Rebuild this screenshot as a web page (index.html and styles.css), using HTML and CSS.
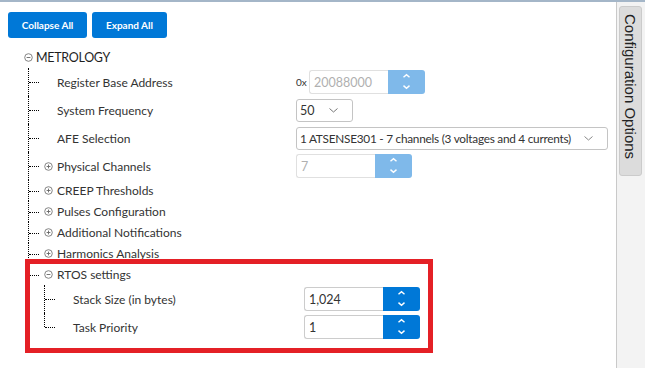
FILE: index.html
```html
<!DOCTYPE html>
<html>
<head>
<meta charset="utf-8">
<link rel="stylesheet" href="styles.css">
</head>
<body>
<div class="app">
  <main class="main">
    <div class="toolbar">
      <button class="btn">Collapse All</button>
      <button class="btn">Expand All</button>
    </div>
    <ul class="tree">
      <li class="node root">
        <div class="row head">
          <svg class="exp" width="9" height="9" viewBox="0 0 9 9"><circle cx="4.5" cy="4.5" r="3.8" fill="none" stroke="#777" stroke-width="0.9"/><path d="M2.6 4.5H6.4" stroke="#666" stroke-width="0.9"/></svg>
          <span class="title">METROLOGY</span>
        </div>
        <ul class="children lvl1">
          <li class="node">
            <div class="row tall leaf">
              <span class="label">Register Base Address</span>
              <div class="ctrl">
                <span class="prefix">0x</span>
                <div class="field disabled"><span class="value">20088000</span></div>
                <div class="spin disabled"><svg width="37" height="24" viewBox="0 0 37 24"><path d="M15.5 7.2L18.5 4.6L21.5 7.2M15.5 15.6L18.5 18.2L21.5 15.6" fill="none" stroke="#fff" stroke-width="1.4"/></svg></div>
              </div>
            </div>
          </li>
          <li class="node">
            <div class="row tall leaf">
              <span class="label">System Frequency</span>
              <div class="ctrl">
                <div class="select small"><span class="value">50</span><svg class="chev" width="9" height="5" viewBox="0 0 9 5"><path d="M0.5 0.5L4.5 4L8.5 0.5" fill="none" stroke="#777" stroke-width="1"/></svg></div>
              </div>
            </div>
          </li>
          <li class="node">
            <div class="row tall leaf">
              <span class="label">AFE Selection</span>
              <div class="ctrl">
                <div class="select wide"><span class="value">1 ATSENSE301 - 7 channels (3 voltages and 4 currents)</span><svg class="chev" width="9" height="5" viewBox="0 0 9 5"><path d="M0.5 0.5L4.5 4L8.5 0.5" fill="none" stroke="#888" stroke-width="1"/></svg></div>
              </div>
            </div>
          </li>
          <li class="node">
            <div class="row tall branch">
              <svg class="exp" width="9" height="9" viewBox="0 0 9 9"><circle cx="4.5" cy="4.5" r="3.8" fill="none" stroke="#777" stroke-width="0.9"/><path d="M2.6 4.5H6.4M4.5 2.6V6.4" stroke="#666" stroke-width="0.9"/></svg>
              <span class="label blabel">Physical Channels</span>
              <div class="ctrl">
                <div class="field disabled"><span class="value">7</span></div>
                <div class="spin disabled"><svg width="37" height="24" viewBox="0 0 37 24"><path d="M15.5 7.2L18.5 4.6L21.5 7.2M15.5 15.6L18.5 18.2L21.5 15.6" fill="none" stroke="#fff" stroke-width="1.4"/></svg></div>
              </div>
            </div>
          </li>
          <li class="node">
            <div class="row branch">
              <svg class="exp" width="9" height="9" viewBox="0 0 9 9"><circle cx="4.5" cy="4.5" r="3.8" fill="none" stroke="#777" stroke-width="0.9"/><path d="M2.6 4.5H6.4M4.5 2.6V6.4" stroke="#666" stroke-width="0.9"/></svg>
              <span class="text">CREEP Thresholds</span>
            </div>
          </li>
          <li class="node">
            <div class="row branch">
              <svg class="exp" width="9" height="9" viewBox="0 0 9 9"><circle cx="4.5" cy="4.5" r="3.8" fill="none" stroke="#777" stroke-width="0.9"/><path d="M2.6 4.5H6.4M4.5 2.6V6.4" stroke="#666" stroke-width="0.9"/></svg>
              <span class="text">Pulses Configuration</span>
            </div>
          </li>
          <li class="node">
            <div class="row branch">
              <svg class="exp" width="9" height="9" viewBox="0 0 9 9"><circle cx="4.5" cy="4.5" r="3.8" fill="none" stroke="#777" stroke-width="0.9"/><path d="M2.6 4.5H6.4M4.5 2.6V6.4" stroke="#666" stroke-width="0.9"/></svg>
              <span class="text">Additional Notifications</span>
            </div>
          </li>
          <li class="node">
            <div class="row branch">
              <svg class="exp" width="9" height="9" viewBox="0 0 9 9"><circle cx="4.5" cy="4.5" r="3.8" fill="none" stroke="#777" stroke-width="0.9"/><path d="M2.6 4.5H6.4M4.5 2.6V6.4" stroke="#666" stroke-width="0.9"/></svg>
              <span class="text">Harmonics Analysis</span>
            </div>
          </li>
          <li class="node">
            <div class="row branch">
              <svg class="exp" width="9" height="9" viewBox="0 0 9 9"><circle cx="4.5" cy="4.5" r="3.8" fill="none" stroke="#777" stroke-width="0.9"/><path d="M2.6 4.5H6.4" stroke="#666" stroke-width="0.9"/></svg>
              <span class="text">RTOS settings</span>
            </div>
            <ul class="children lvl2">
              <li class="node">
                <div class="row tall leaf">
                  <span class="label">Stack Size (in bytes)</span>
                  <div class="ctrl">
                    <div class="field"><span class="value">1,024</span></div>
                    <div class="spin"><svg width="37" height="24" viewBox="0 0 37 24"><path d="M15.5 7.2L18.5 4.6L21.5 7.2M15.5 15.6L18.5 18.2L21.5 15.6" fill="none" stroke="#fff" stroke-width="1.4"/></svg></div>
                  </div>
                </div>
              </li>
              <li class="node">
                <div class="row tall leaf">
                  <span class="label">Task Priority</span>
                  <div class="ctrl">
                    <div class="field"><span class="value">1</span></div>
                    <div class="spin"><svg width="37" height="24" viewBox="0 0 37 24"><path d="M15.5 7.2L18.5 4.6L21.5 7.2M15.5 15.6L18.5 18.2L21.5 15.6" fill="none" stroke="#fff" stroke-width="1.4"/></svg></div>
                  </div>
                </div>
              </li>
            </ul>
          </li>
        </ul>
      </li>
    </ul>
  </main>
  <aside class="sidebar">
    <div class="tab"><span class="tab-text">Configuration Options</span></div>
  </aside>
</div>
<div class="annotation"></div>
</body>
</html>
```
FILE: styles.css
```css
html, body {
  margin: 0;
  padding: 0;
  background: #fff;
}
body {
  position: relative;
  width: 645px;
  height: 368px;
  overflow: hidden;
  font-family: Lato, "Open Sans", sans-serif;
  font-size: 12px;
  color: #333;
}
.app {
  display: flex;
  height: 366px;
  border-top: 2px solid #a4b6c8;
}
.main {
  width: 616px;
  padding-top: 10px;
  box-sizing: border-box;
}
.toolbar {
  display: flex;
  gap: 5px;
  padding-left: 8px;
}
.btn {
  height: 26px;
  border: none;
  border-radius: 3px;
  background: #0078d7;
  color: #fff;
  font-family: Lato, sans-serif;
  font-size: 10px;
  font-weight: 700;
  padding: 0;
  white-space: nowrap;
}
.btn:first-child { width: 79px; }
.btn:last-child { width: 75px; }

.tree {
  list-style: none;
  margin: 9px 0 0 0;
  padding: 0 0 0 24px;
}
.children {
  list-style: none;
  margin: 0;
}
.lvl1 { padding-left: 4px; }
.lvl2 { padding-left: 16px; }

.node { position: relative; }
.row {
  position: relative;
  display: flex;
  align-items: center;
  height: 21px;
  white-space: nowrap;
}
.row.tall { height: 28px; }
.head { gap: 3px; }
.title { color: #1e1e1e; font-size: 12.5px; letter-spacing: -0.3px; }

.children > .node:not(:last-child)::before {
  content: "";
  position: absolute;
  left: 0;
  top: 0;
  bottom: 0;
  border-left: 1px dotted #000;
}
.children > .node > .row::before {
  content: "";
  position: absolute;
  left: 0;
  top: 0;
  height: 50%;
  border-left: 1px dotted #000;
}
.children > .node > .row::after {
  content: "";
  position: absolute;
  left: 1px;
  top: 50%;
  width: 10px;
  border-top: 1px dotted #000;
}
.leaf { padding-left: 29px; }
.branch { padding-left: 16px; gap: 4px; }
.label { width: 239px; flex: none; }
.blabel { width: 235px; }
.lvl2 .label { width: 231px; }

.ctrl { display: flex; align-items: center; }
.prefix { font-size: 10px; width: 13px; color: #333; }
.field {
  width: 79px;
  height: 24px;
  box-sizing: border-box;
  border: 1px solid #ccc;
  border-right: none;
  border-radius: 3px 0 0 3px;
  display: flex;
  align-items: center;
  padding-left: 4px;
  color: #333;
  font-size: 12.5px;
}
.field.disabled { color: #b0b0b0; border-color: #e0e0e0; }
.spin {
  width: 37px;
  height: 24px;
  background: #0078d7;
  border-radius: 0 3px 3px 0;
  display: flex;
}
.spin.disabled { background: #7fb9ea; }

.select {
  height: 23px;
  box-sizing: border-box;
  border: 1px solid #c4c4c4;
  border-radius: 3px;
  display: flex;
  align-items: center;
  justify-content: space-between;
  padding: 0 14px 0 3px;
  font-size: 12.5px;
  color: #333;
  overflow: hidden;
}
.select.small { width: 57px; }
.select.wide { width: 312px; font-size: 11.8px; letter-spacing: -0.25px; }

.sidebar {
  width: 29px;
  box-sizing: border-box;
  border-left: 1px solid #c9c9c9;
  background: #f3f3f3;
}
.tab {
  margin: 4px 0 0 2px;
  width: 23px;
  height: 170px;
  box-sizing: border-box;
  background: #dcdcdc;
  border: 1px solid #cbcbcb;
  border-radius: 3px;
  display: flex;
  justify-content: center;
  padding-top: 7px;
}
.tab-text {
  writing-mode: vertical-rl;
  font-family: "Liberation Sans", Arial, sans-serif;
  font-size: 15px;
  color: #222;
}
.annotation {
  position: absolute;
  left: 25px;
  top: 259px;
  width: 408px;
  height: 94px;
  box-sizing: border-box;
  border: 5px solid #e42026;
}
```
